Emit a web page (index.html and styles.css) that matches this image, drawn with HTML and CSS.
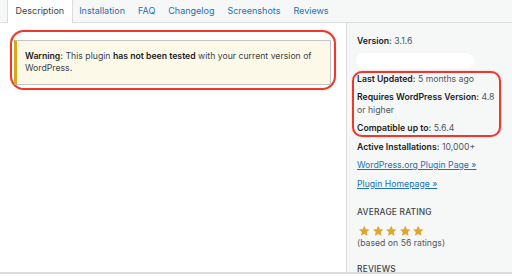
FILE: index.html
```html
<!DOCTYPE html>
<html lang="en">
<head>
    <meta charset="UTF-8">
    <title>Plugin details</title>
    <link rel="stylesheet" href="styles.css">
</head>
<body>
    <div class="tabs">
        <a class="tab active">Description</a>
        <a class="tab">Installation</a>
        <a class="tab">FAQ</a>
        <a class="tab">Changelog</a>
        <a class="tab">Screenshots</a>
        <a class="tab">Reviews</a>
    </div>

    <div class="layout">
        <div class="main">
            <div class="marker marker-warning">
                <div class="notice-warning">
                    <p><strong>Warning:</strong> This plugin <strong>has not been tested</strong> with your current version of WordPress.</p>
                </div>
            </div>
        </div>

        <div class="sidebar">
            <div class="meta"><strong>Version:</strong> 3.1.6</div>
            <div class="redacted"></div>

            <div class="marker marker-meta">
                <div class="meta"><strong>Last Updated:</strong> 5 months ago</div>
                <div class="meta"><strong>Requires WordPress Version:</strong> 4.8 or higher</div>
                <div class="meta"><strong>Compatible up to:</strong> 5.6.4</div>
            </div>

            <div class="meta"><strong>Active Installations:</strong> 10,000+</div>
            <div class="meta"><a href="#" class="meta-link">WordPress.org Plugin Page &raquo;</a></div>
            <div class="meta"><a href="#" class="meta-link">Plugin Homepage &raquo;</a></div>

            <h3 class="section-title">Average Rating</h3>
            <div class="stars">
                <svg viewBox="0 0 24 24"><path d="M12 1.5l3.2 6.9 7.3.8-5.5 5 1.6 7.3L12 17.8l-6.6 3.7L7 14.2l-5.5-5 7.3-.8z"/></svg>
                <svg viewBox="0 0 24 24"><path d="M12 1.5l3.2 6.9 7.3.8-5.5 5 1.6 7.3L12 17.8l-6.6 3.7L7 14.2l-5.5-5 7.3-.8z"/></svg>
                <svg viewBox="0 0 24 24"><path d="M12 1.5l3.2 6.9 7.3.8-5.5 5 1.6 7.3L12 17.8l-6.6 3.7L7 14.2l-5.5-5 7.3-.8z"/></svg>
                <svg viewBox="0 0 24 24"><path d="M12 1.5l3.2 6.9 7.3.8-5.5 5 1.6 7.3L12 17.8l-6.6 3.7L7 14.2l-5.5-5 7.3-.8z"/></svg>
                <svg viewBox="0 0 24 24"><path d="M12 1.5l3.2 6.9 7.3.8-5.5 5 1.6 7.3L12 17.8l-6.6 3.7L7 14.2l-5.5-5 7.3-.8z"/></svg>
            </div>
            <div class="rating-count">(based on 56 ratings)</div>

            <h3 class="section-title reviews-title">Reviews</h3>
        </div>
    </div>
</body>
</html>
```

FILE: styles.css
```css
* {
    margin: 0;
    padding: 0;
    box-sizing: border-box;
}

html, body {
    height: 276px;
    overflow: hidden;
}

body {
    font-family: 'Inter', 'Liberation Sans', sans-serif;
    font-size: 8.7px;
    color: #50575e;
    background: #fff;
}

strong {
    font-weight: 600;
    color: #1d2327;
}

.tabs {
    display: flex;
    height: 23px;
    padding-left: 7px;
    background: #f6f7f7;
    border-bottom: 1px solid #dcdcde;
}

.tab {
    padding: 0 6.5px;
    line-height: 22px;
    color: #2271b1;
    font-size: 9px;
}

.tab.active {
    height: 23px;
    padding: 0 7.5px;
    background: #fff;
    color: #3c434a;
    border-left: 1px solid #dcdcde;
    border-right: 1px solid #dcdcde;
}

.layout {
    display: flex;
    height: 251px;
    border-bottom: 2px solid #dcdcde;
}

.main {
    width: 346px;
    padding: 7px 0 0 10px;
}

.marker {
    border: 2px solid #ea3a2e;
    box-shadow: 0 0 1px #f04a40;
}

.marker-warning {
    width: 326px;
    padding: 8px 3px 3px 2px;
    border-radius: 14px;
}

.notice-warning {
    height: 45px;
    padding: 10px 8px 0;
    background: #fcf9e8;
    border: 1px solid #c3c4c7;
    border-left: 3px solid #dba617;
    color: #3c434a;
    line-height: 11.5px;
}

.notice-warning p {
    width: 290px;
}

.sidebar {
    flex: 1;
    padding: 12px 0 0 10px;
    background: #f6f7f7;
    border-left: 1px solid #dcdcde;
}

.meta {
    line-height: 12.5px;
    margin-bottom: 6px;
}

.redacted {
    width: 118px;
    height: 16px;
    margin: -1px 0 2px -1px;
    background: #fff;
    border-radius: 8px;
}

.marker-meta {
    width: 149px;
    margin: 0 0 4px -5px;
    padding: 0 0 0 3px;
    border-radius: 10px;
}

.marker-meta .meta:last-child {
    margin-bottom: 0;
}

.meta-link {
    color: #2271b1;
    text-decoration: underline;
}

.section-title {
    margin-top: 16px;
    font-size: 8.4px;
    font-weight: 500;
    line-height: 12.5px;
    letter-spacing: 0.2px;
    text-transform: uppercase;
    color: #3c434a;
}

.stars {
    display: flex;
    gap: 1px;
    margin: 6px 0 0 1px;
}

.stars svg {
    width: 12.5px;
    height: 12px;
    fill: #e0a52e;
}

.rating-count {
    line-height: 12.5px;
}

.reviews-title {
    margin-top: 14px;
}
```
